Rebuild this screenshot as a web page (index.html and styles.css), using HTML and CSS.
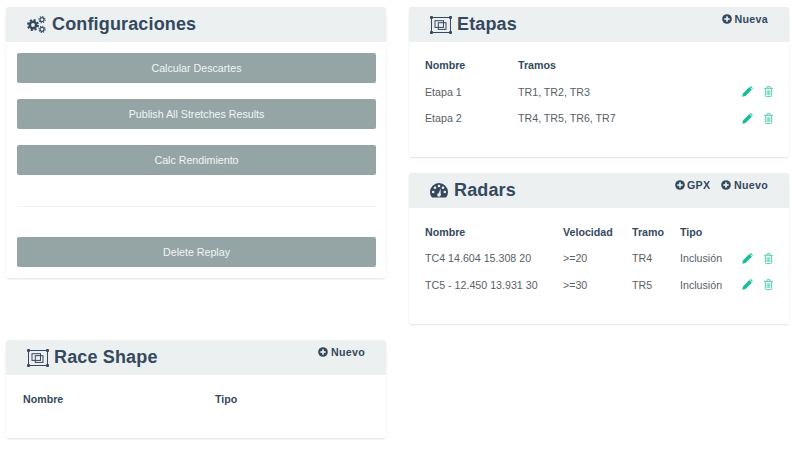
FILE: index.html
```html
<!DOCTYPE html>
<html lang="es">
<head>
<meta charset="utf-8">
<title>Configuraciones</title>
<link rel="stylesheet" href="styles.css">
</head>
<body>
<svg class="defs" width="0" height="0" aria-hidden="true">
  <defs>
    <symbol id="i-shape" viewBox="0 0 22 18">
      <g fill="none" stroke="currentColor" stroke-width="1">
        <rect x="1.5" y="1.5" width="19" height="15"/>
        <rect x="5" y="4.7" width="8.5" height="6.7"/>
        <rect x="8.3" y="6.7" width="7.7" height="6.7"/>
      </g>
      <g fill="currentColor">
        <rect x="0" y="0" width="3" height="3" rx="1"/>
        <rect x="19" y="0" width="3" height="3" rx="1"/>
        <rect x="0" y="15" width="3" height="3" rx="1"/>
        <rect x="19" y="15" width="3" height="3" rx="1"/>
      </g>
    </symbol>
    <symbol id="i-plus" viewBox="0 0 12 12">
      <circle cx="6" cy="6" r="5.8" fill="currentColor"/>
      <rect x="2.8" y="5" width="6.4" height="2" fill="#ecf0f1"/>
      <rect x="5" y="2.8" width="2" height="6.4" fill="#ecf0f1"/>
    </symbol>
    <symbol id="i-pencil" viewBox="0 0 12 12">
      <path fill="currentColor" d="M0.3 11.7 L1 8.2 L8 1.2 L10.8 4 L3.8 11 Z M8.8 0.6 Q9.5 0 10.2 0.6 L11.4 1.8 Q12 2.5 11.4 3.2 L11.3 3.4 L8.6 0.7 Z"/>
    </symbol>
    <symbol id="i-trash" viewBox="0 0 10 12">
      <path fill="none" stroke="currentColor" stroke-width="1.1" d="M1.5 3 V10.5 Q1.5 11.5 2.5 11.5 H7.5 Q8.5 11.5 8.5 10.5 V3 M0 2.5 H10 M3 2.5 L3.6 0.6 H6.4 L7 2.5"/>
      <path fill="currentColor" d="M3 4.5 H4 V10 H3 Z M4.6 4.5 H5.4 V10 H4.6 Z M6 4.5 H7 V10 H6 Z"/>
    </symbol>
    <symbol id="i-gears" viewBox="0 0 19 18">
      <g fill="none" stroke="currentColor">
        <circle cx="6" cy="9" r="3.2" stroke-width="2.6"/>
        <circle cx="6" cy="9" r="5" stroke-width="2" stroke-dasharray="2.1 1.83"/>
        <circle cx="15" cy="3.7" r="2" stroke-width="1.2"/>
        <circle cx="15" cy="3.7" r="3.1" stroke-width="1.1" stroke-dasharray="1.2 1.23"/>
        <circle cx="15" cy="13.3" r="2" stroke-width="1.2"/>
        <circle cx="15" cy="13.3" r="3.1" stroke-width="1.1" stroke-dasharray="1.2 1.23"/>
      </g>
    </symbol>
    <symbol id="i-gauge" viewBox="0 0 18 16">
      <path fill="currentColor" d="M9 1 A9 9 0 0 0 0 10 Q0 13 1.6 15 Q2 15.5 2.6 15.5 H15.4 Q16 15.5 16.4 15 Q18 13 18 10 A9 9 0 0 0 9 1 Z"/>
      <g fill="#ecf0f1">
        <circle cx="3.2" cy="10" r="1.3"/>
        <circle cx="5" cy="5.8" r="1.3"/>
        <circle cx="9" cy="4" r="1.3"/>
        <circle cx="13" cy="5.8" r="1.3"/>
        <circle cx="14.8" cy="10" r="1.3"/>
        <path d="M8 13 L10.6 6.5 L10.6 13 Z"/>
        <circle cx="9" cy="13" r="1.8"/>
      </g>
    </symbol>
  </defs>
</svg>
<main class="page">
  <div class="col col-left">
    <section class="card">
      <header class="card-head">
        <h2 class="card-title"><svg class="ti ti-gears"><use href="#i-gears"/></svg>Configuraciones</h2>
      </header>
      <div class="card-body actions">
        <button class="btn" type="button">Calcular Descartes</button>
        <button class="btn" type="button">Publish All Stretches Results</button>
        <button class="btn" type="button">Calc Rendimiento</button>
        <hr class="sep">
        <button class="btn" type="button">Delete Replay</button>
      </div>
    </section>
    <section class="card">
      <header class="card-head">
        <h2 class="card-title"><svg class="ti ti-shape"><use href="#i-shape"/></svg>Race Shape</h2>
        <div class="head-links"><a class="add"><svg class="plus"><use href="#i-plus"/></svg>Nuevo</a></div>
      </header>
      <div class="card-body shape-body">
        <div class="row row-shape head"><span>Nombre</span><span>Tipo</span></div>
      </div>
    </section>
  </div>
  <div class="col col-right">
    <section class="card">
      <header class="card-head">
        <h2 class="card-title"><svg class="ti ti-shape"><use href="#i-shape"/></svg>Etapas</h2>
        <div class="head-links"><a class="add"><svg class="plus"><use href="#i-plus"/></svg>Nueva</a></div>
      </header>
      <div class="card-body table-body">
        <div class="row row-etapa head"><span>Nombre</span><span>Tramos</span><span></span></div>
        <div class="row row-etapa"><span>Etapa 1</span><span>TR1, TR2, TR3</span>
          <span class="tools"><svg class="pencil"><use href="#i-pencil"/></svg><svg class="trash"><use href="#i-trash"/></svg></span></div>
        <div class="row row-etapa"><span>Etapa 2</span><span>TR4, TR5, TR6, TR7</span>
          <span class="tools"><svg class="pencil"><use href="#i-pencil"/></svg><svg class="trash"><use href="#i-trash"/></svg></span></div>
      </div>
    </section>
    <section class="card">
      <header class="card-head">
        <h2 class="card-title"><svg class="ti ti-gauge"><use href="#i-gauge"/></svg>Radars</h2>
        <div class="head-links"><a class="add"><svg class="plus"><use href="#i-plus"/></svg>GPX</a><a class="add"><svg class="plus"><use href="#i-plus"/></svg>Nuevo</a></div>
      </header>
      <div class="card-body table-body radar-body">
        <div class="row row-radar head"><span>Nombre</span><span>Velocidad</span><span>Tramo</span><span>Tipo</span><span></span></div>
        <div class="row row-radar"><span>TC4 14.604 15.308 20</span><span>&gt;=20</span><span>TR4</span><span>Inclusión</span>
          <span class="tools"><svg class="pencil"><use href="#i-pencil"/></svg><svg class="trash"><use href="#i-trash"/></svg></span></div>
        <div class="row row-radar"><span>TC5 - 12.450 13.931 30</span><span>&gt;=30</span><span>TR5</span><span>Inclusión</span>
          <span class="tools"><svg class="pencil"><use href="#i-pencil"/></svg><svg class="trash"><use href="#i-trash"/></svg></span></div>
      </div>
    </section>
  </div>
</main>
</body>
</html>
```
FILE: styles.css
```css
* { box-sizing: border-box; }
html, body { margin: 0; padding: 0; background: #fff; }
body {
  width: 800px;
  height: 454px;
  overflow: hidden;
  font-family: "Liberation Sans", Arial, sans-serif;
  font-size: 10.67px;
  color: #596066;
}
.defs { position: absolute; }
.page {
  display: flex;
  gap: 23px;
  padding: 7px 11px 0 6px;
  align-items: flex-start;
}
.col { width: 380px; display: flex; flex-direction: column; }
.col-left { gap: 62px; }
.col-right { gap: 16px; }
.card {
  background: #fff;
  border-radius: 3px;
  box-shadow: 0 1px 2px rgba(0, 0, 0, 0.12);
  overflow: hidden;
}
.card-head {
  height: 35px;
  background: #ecf0f1;
  display: flex;
  justify-content: space-between;
  align-items: flex-start;
  padding: 0 21px;
}
.card-title {
  margin: 0;
  height: 35px;
  display: flex;
  align-items: center;
  font-size: 18px;
  font-weight: 700;
  letter-spacing: 0.15px;
  color: #34495e;
}
.ti { color: #34495e; flex: none; margin-right: 5px; }
.ti-gears { width: 19px; height: 18px; margin-right: 6px; }
.ti-shape { width: 22px; height: 18px; margin-right: 5px; }
.ti-gauge { width: 18px; height: 16px; margin-right: 6px; }
.head-links { display: flex; gap: 11px; padding-top: 5px; }
.add {
  display: flex;
  align-items: center;
  gap: 2.5px;
  height: 14px;
  font-size: 10.67px;
  font-weight: 700;
  letter-spacing: 0.3px;
  color: #34495e;
}
.plus { width: 10px; height: 10px; }
.card-body { background: #fff; }
.actions {
  display: flex;
  flex-direction: column;
  padding: 11px 10px 11px 11px;
  height: 236px;
}
.btn {
  height: 30px;
  margin-bottom: 16px;
  border: 0;
  border-radius: 2px;
  background: #95a5a6;
  color: #f2f5f5;
  font: 10.67px "Liberation Sans", Arial, sans-serif;
  text-align: center;
}
.btn:last-child { margin-bottom: 0; }
.sep {
  width: 100%;
  height: 1px;
  border: 0;
  margin: 15px 0 30px;
  background: #f1f3f4;
}
.table-body { padding: 10px 16px 25px; }
.radar-body { padding-top: 11px; padding-bottom: 25.5px; }
.row { display: grid; height: 26.5px; align-items: center; }
.row.head { font-weight: 700; color: #34495e; }
.row-etapa { grid-template-columns: 93px 1fr auto; }
.row-radar { grid-template-columns: 138px 69px 48px 57px 1fr; }
.row-shape { grid-template-columns: 192px 1fr; }
.shape-body { padding: 11px 17px 0; height: 63px; }
.tools { display: flex; gap: 11px; align-items: center; justify-content: flex-end; }
.pencil { width: 11px; height: 11px; color: #1abc9c; }
.trash { width: 9px; height: 11px; color: #1abc9c; opacity: 0.75; }
```
